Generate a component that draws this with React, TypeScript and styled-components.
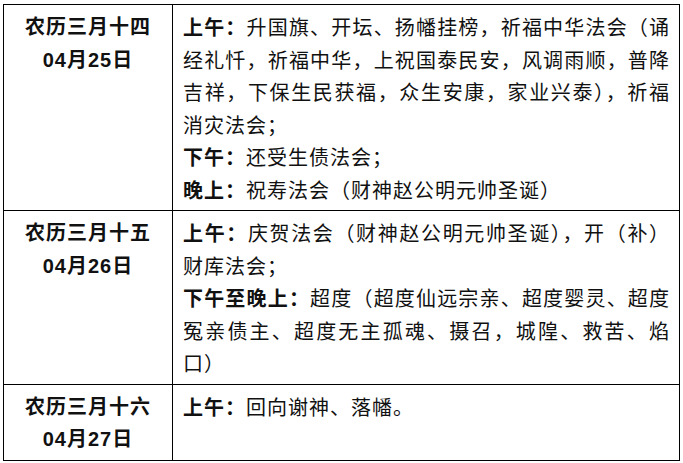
import { FC } from "react";
import styled, { createGlobalStyle } from "styled-components";

const GlobalStyle = createGlobalStyle`
  html, body {
    margin: 0;
    padding: 0;
    background: #fff;
  }
  body {
    font-family: "Liberation Sans", "Noto Sans CJK SC", sans-serif;
    color: #111;
  }
`;

interface Part {
  label: string;
  text: string;
}

interface Day {
  lunar: string;
  date: string;
  parts: Part[];
}

const days: Day[] = [
  {
    lunar: "农历三月十四",
    date: "04月25日",
    parts: [
      {
        label: "上午：",
        text: "升国旗、开坛、扬幡挂榜，祈福中华法会（诵经礼忏，祈福中华，上祝国泰民安，风调雨顺，普降吉祥，下保生民获福，众生安康，家业兴泰），祈福消灾法会；",
      },
      { label: "下午：", text: "还受生债法会；" },
      { label: "晚上：", text: "祝寿法会（财神赵公明元帅圣诞）" },
    ],
  },
  {
    lunar: "农历三月十五",
    date: "04月26日",
    parts: [
      {
        label: "上午：",
        text: "庆贺法会（财神赵公明元帅圣诞），开（补）财库法会；",
      },
      {
        label: "下午至晚上：",
        text: "超度（超度仙远宗亲、超度婴灵、超度冤亲债主、超度无主孤魂、摄召，城隍、救苦、焰口）",
      },
    ],
  },
  {
    lunar: "农历三月十六",
    date: "04月27日",
    parts: [{ label: "上午：", text: "回向谢神、落幡。" }],
  },
];

const Page = styled.div`
  padding: 4px 3px;
`;

const Table = styled.table`
  width: 677px;
  border-collapse: collapse;
  table-layout: fixed;
  border: 1.5px solid #000;
`;

const Col = styled.col<{ $w?: number }>`
  width: ${(p) => (p.$w ? `${p.$w}px` : "auto")};
`;

const Cell = styled.td`
  border: 1px solid #000;
  vertical-align: top;
  padding: 6px 9px 4px 10px;
  font-size: 20px;
  line-height: 32.5px;
  letter-spacing: 1px;
`;

const DateCell = styled(Cell)`
  text-align: center;
  font-weight: 700;
  padding-left: 2px;
  padding-right: 2px;
`;

const ContentCell = styled(Cell)`
  text-align: justify;
  font-family: "Noto Sans CJK SC", sans-serif;
`;

const Line = styled.div``;

const Label = styled.b`
  font-weight: 700;
`;

const App: FC = () => {
  return (
    <>
      <GlobalStyle />
      <Page>
        <Table>
          <colgroup>
            <Col $w={169} />
            <Col />
          </colgroup>
          <tbody>
            {days.map((day) => (
              <tr key={day.date}>
                <DateCell>
                  <Line>{day.lunar}</Line>
                  <Line>{day.date}</Line>
                </DateCell>
                <ContentCell>
                  {day.parts.map((part) => (
                    <Line key={part.label}>
                      <Label>{part.label}</Label>
                      {part.text}
                    </Line>
                  ))}
                </ContentCell>
              </tr>
            ))}
          </tbody>
        </Table>
      </Page>
    </>
  );
};

export default App;
